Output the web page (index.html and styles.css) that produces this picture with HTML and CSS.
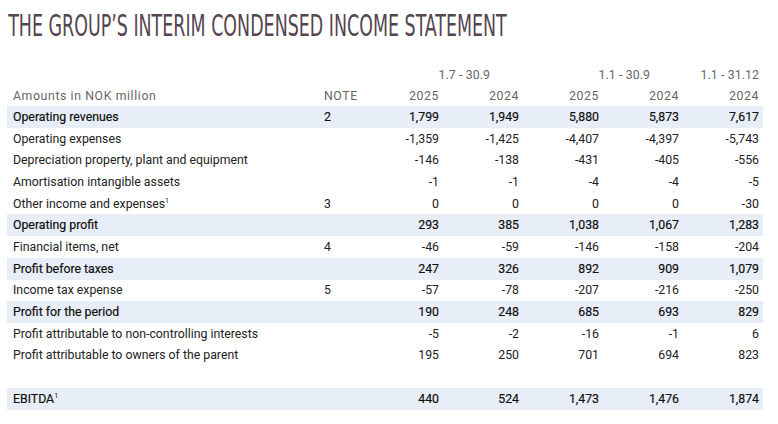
FILE: index.html
```html
<!DOCTYPE html>
<html>
<head>
  <title>Interim Condensed Income Statement</title>
  <link rel="stylesheet" href="styles.css">
</head>
<body>
  <h1 class="title">THE GROUP’S INTERIM CONDENSED INCOME STATEMENT</h1>
  <table class="statement">
    <colgroup>
      <col class="col-label">
      <col class="col-note">
      <col class="col-num">
      <col class="col-num">
      <col class="col-num">
      <col class="col-num">
      <col class="col-num">
    </colgroup>
    <thead>
      <tr class="period">
        <th></th>
        <th></th>
        <th colspan="2" class="span">1.7 - 30.9</th>
        <th colspan="2" class="span">1.1 - 30.9</th>
        <th class="num">1.1 - 31.12</th>
      </tr>
      <tr class="years">
        <th class="label">Amounts in NOK million</th>
        <th class="note">NOTE</th>
        <th class="num">2025</th>
        <th class="num">2024</th>
        <th class="num">2025</th>
        <th class="num">2024</th>
        <th class="num">2024</th>
      </tr>
    </thead>
    <tbody>
      <tr class="total">
        <td class="label">Operating revenues</td><td class="note">2</td>
        <td class="num">1,799</td><td class="num">1,949</td><td class="num">5,880</td><td class="num">5,873</td><td class="num">7,617</td>
      </tr>
      <tr>
        <td class="label">Operating expenses</td><td class="note"></td>
        <td class="num">-1,359</td><td class="num">-1,425</td><td class="num">-4,407</td><td class="num">-4,397</td><td class="num">-5,743</td>
      </tr>
      <tr>
        <td class="label">Depreciation property, plant and equipment</td><td class="note"></td>
        <td class="num">-146</td><td class="num">-138</td><td class="num">-431</td><td class="num">-405</td><td class="num">-556</td>
      </tr>
      <tr>
        <td class="label">Amortisation intangible assets</td><td class="note"></td>
        <td class="num">-1</td><td class="num">-1</td><td class="num">-4</td><td class="num">-4</td><td class="num">-5</td>
      </tr>
      <tr>
        <td class="label">Other income and expenses<sup>1</sup></td><td class="note">3</td>
        <td class="num">0</td><td class="num">0</td><td class="num">0</td><td class="num">0</td><td class="num">-30</td>
      </tr>
      <tr class="total">
        <td class="label">Operating profit</td><td class="note"></td>
        <td class="num">293</td><td class="num">385</td><td class="num">1,038</td><td class="num">1,067</td><td class="num">1,283</td>
      </tr>
      <tr>
        <td class="label">Financial items, net</td><td class="note">4</td>
        <td class="num">-46</td><td class="num">-59</td><td class="num">-146</td><td class="num">-158</td><td class="num">-204</td>
      </tr>
      <tr class="total">
        <td class="label">Profit before taxes</td><td class="note"></td>
        <td class="num">247</td><td class="num">326</td><td class="num">892</td><td class="num">909</td><td class="num">1,079</td>
      </tr>
      <tr>
        <td class="label">Income tax expense</td><td class="note">5</td>
        <td class="num">-57</td><td class="num">-78</td><td class="num">-207</td><td class="num">-216</td><td class="num">-250</td>
      </tr>
      <tr class="total">
        <td class="label">Profit for the period</td><td class="note"></td>
        <td class="num">190</td><td class="num">248</td><td class="num">685</td><td class="num">693</td><td class="num">829</td>
      </tr>
      <tr>
        <td class="label">Profit attributable to non-controlling interests</td><td class="note"></td>
        <td class="num">-5</td><td class="num">-2</td><td class="num">-16</td><td class="num">-1</td><td class="num">6</td>
      </tr>
      <tr>
        <td class="label">Profit attributable to owners of the parent</td><td class="note"></td>
        <td class="num">195</td><td class="num">250</td><td class="num">701</td><td class="num">694</td><td class="num">823</td>
      </tr>
      <tr class="spacer">
        <td colspan="7"></td>
      </tr>
      <tr class="total">
        <td class="label">EBITDA<sup>1</sup></td><td class="note"></td>
        <td class="num">440</td><td class="num">524</td><td class="num">1,473</td><td class="num">1,476</td><td class="num">1,874</td>
      </tr>
    </tbody>
  </table>
</body>
</html>
```

FILE: styles.css
```css
body {
  margin: 0;
  padding: 0;
  background-color: #ffffff;
  font-family: Roboto, "Liberation Sans", sans-serif;
  color: #222222;
}

.title {
  margin: 0;
  padding: 9px 0 0 13px;
  height: 62px;
  box-sizing: border-box;
  font-family: "Liberation Sans Narrow", "DejaVu Sans Condensed", sans-serif;
  font-weight: normal;
  font-size: 31px;
  line-height: 32px;
  color: #55454f;
  white-space: nowrap;
  transform: scaleX(0.626);
  transform-origin: left top;
}

.statement {
  margin-left: 7px;
  width: 756px;
  border-collapse: collapse;
  table-layout: fixed;
  font-size: 12.3px;
}

.col-label {
  width: 311px;
}

.col-note {
  width: 45px;
}

.col-num {
  width: 80px;
}

.statement th,
.statement td {
  height: 21.7px;
  padding: 0;
  line-height: 14px;
  white-space: nowrap;
}

.statement th {
  font-weight: normal;
  color: #666666;
  letter-spacing: 0.6px;
}

.period th {
  height: 22px;
  padding-top: 2px;
  letter-spacing: 0.1px;
}

.years th {
  height: 20px;
}

.statement .label {
  text-align: left;
  padding-left: 6px;
}

.statement .note {
  text-align: left;
  padding-left: 6px;
}

.statement .num {
  text-align: right;
  padding-right: 4px;
}

.statement .span {
  text-align: right;
  padding-right: 33px;
}

.total td {
  background-color: #e8eef8;
  color: #111111;
  -webkit-text-stroke: 0.2px #111111;
}

.spacer td {
  height: 21.7px;
}

sup {
  font-size: 7px;
  line-height: 0;
  vertical-align: 5px;
  -webkit-text-stroke: 0;
}
```
